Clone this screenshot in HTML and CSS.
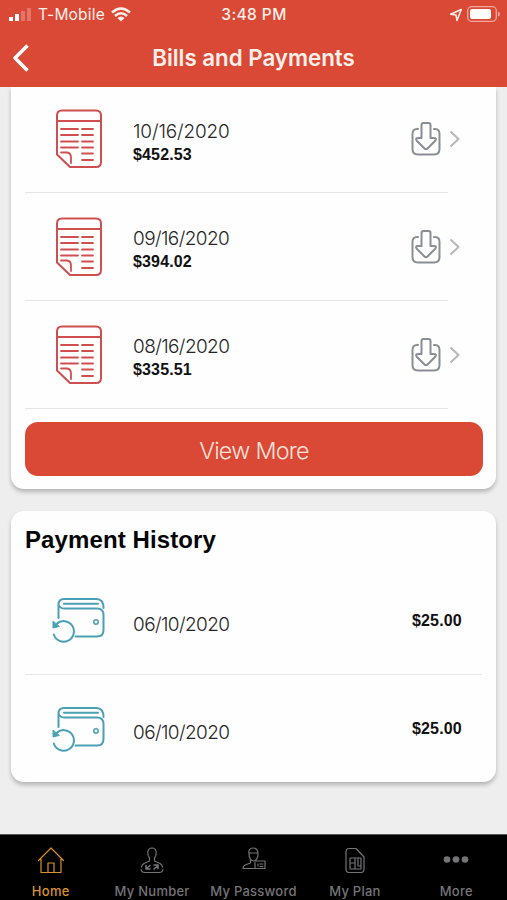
FILE: index.html
```
<!DOCTYPE html>
<html lang="en">
<head>
<meta charset="utf-8">
<title>Bills and Payments</title>
<link rel="stylesheet" href="styles.css">
</head>
<body>
<svg class="defs" aria-hidden="true">
  <symbol id="bill" viewBox="0 0 48 60">
    <path d="M7 1.500H41Q46 1.500 46 6.500V53Q46 58 41 58H15L2 45.500V6.500Q2 1.500 7 1.500ZM2 12H46"/>
    <path stroke-width="1.8" d="M6 20H23M27 20H38M6 26H23M27 26H38M6 32.500H23M27 32.500H38M6 38.500H23M27 38.500H38M27 44.500H38M27 51H38M6 43.500H12Q16 44 16 48.500V54"/>
  </symbol>
  <symbol id="download" viewBox="0 0 30 36">
    <path d="M7 8H6Q1.500 8 1.500 13V28Q1.500 33.500 7 33.500H23Q28.500 33.500 28.500 28V13Q28.500 8 24 8H23"/>
    <path d="M10.500 4Q10.500 2 12.500 2H17.500Q19.500 2 19.500 4V17H22.500Q26.500 17 24 20L16.500 27.500Q15 29 13.500 27.500L6 20Q3.500 17 7.500 17H10.500Z"/>
  </symbol>
  <symbol id="wallet" viewBox="0 0 56 48">
    <path d="M6.500 21V7.500Q6.500 2 12 2H44.500Q51.500 2 51.500 11M6.500 7.500Q8 11.500 12 11.500H45Q51.500 11.500 51.500 18V33Q51.500 39.500 45 39.500H23.500M12 6.700H46"/>
    <circle cx="44" cy="25" r="2.200" stroke-width="1.500"/>
    <path d="M1.800 37.500A10.300 10.300 0 1 0 4.500 27"/><path d="M1 24.500V31L7 29.500Z" fill="currentColor" stroke-width="1"/>
  </symbol>
</svg>
<div class="screen">
  <header class="top">
    <div class="status">
      <div class="carrier">
        <svg class="signal" viewBox="0 0 22 14"><path d="M0 9h4v4H0zM6 6h4v7H6z"/><path opacity=".25" d="M12 3h4v10h-4zM18 0h4v13h-4z"/></svg>
        <span class="carrier-name">T-Mobile</span>
        <svg class="wifi" viewBox="0 0 20 15"><path d="M1 5.500Q10-2.500 19 5.500M4 9Q10 3.500 16 9"/><path class="solid" d="M6.500 11Q10 8 13.500 11L10 14.500Z"/></svg>
      </div>
      <span class="time">3:48 PM</span>
      <div class="power">
        <svg class="location" viewBox="0 0 14 14"><path d="M1.500 6.200L12.300 1.500L8 12.500L7 7Z"/></svg>
        <svg class="battery" viewBox="0 0 34 16"><rect x=".7" y=".7" width="28.600" height="14.600" rx="4" class="shell"/><rect x="3" y="3" width="21" height="10" rx="2"/><path d="M31 5.500Q33 6 33 8T31 10.500Z" opacity=".5"/></svg>
      </div>
    </div>
    <div class="nav">
      <svg class="back" viewBox="0 0 18 30"><path d="M15.500 2.500L3 15L15.500 27.500"/></svg>
      <h1>Bills and Payments</h1>
    </div>
  </header>
  <main>
    <section class="card bills">
      <div class="row"><svg class="bill"><use href="#bill"/></svg><div class="info"><span class="date">10/16/2020</span><span class="amount">$452.53</span></div><svg class="download"><use href="#download"/></svg><svg class="chev" viewBox="0 0 11 18"><path d="M1.500 1.500L9.500 9L1.500 16.500"/></svg></div>
      <div class="row"><svg class="bill"><use href="#bill"/></svg><div class="info"><span class="date">09/16/2020</span><span class="amount">$394.02</span></div><svg class="download"><use href="#download"/></svg><svg class="chev" viewBox="0 0 11 18"><path d="M1.500 1.500L9.500 9L1.500 16.500"/></svg></div>
      <div class="row"><svg class="bill"><use href="#bill"/></svg><div class="info"><span class="date">08/16/2020</span><span class="amount">$335.51</span></div><svg class="download"><use href="#download"/></svg><svg class="chev" viewBox="0 0 11 18"><path d="M1.500 1.500L9.500 9L1.500 16.500"/></svg></div>
      <button class="more">View More</button>
    </section>
    <section class="card history">
      <h2>Payment History</h2>
      <div class="payment"><svg class="wallet"><use href="#wallet"/></svg><span class="date">06/10/2020</span><span class="amount">$25.00</span></div>
      <div class="payment"><svg class="wallet"><use href="#wallet"/></svg><span class="date">06/10/2020</span><span class="amount">$25.00</span></div>
    </section>
  </main>
  <nav class="tabs">
    <div class="tab active"><svg viewBox="0 0 28 28"><path d="M1.500 14.500L14 2L26.500 14.500M4 13V26.500H24V13M11 26V17H17V26"/></svg><span>Home</span></div>
    <div class="tab"><svg viewBox="0 0 28 28"><path d="M11.500 15V12Q9.800 10 9.800 7Q9.800 2 14 2T18.200 7Q18.200 10 16.500 12V15L22 17.500Q24.500 19 24.500 21M11.500 15L6 17.500Q3.500 19 3.500 21M3 23.500Q3.500 26.500 7 26.500H21Q24.500 26.500 25 23.500"/><path stroke-width="1.600" d="M12 19.500L8 23M8 19.500V23H12M16 23L20 19.500M16 19H20V22.500"/></svg><span>My Number</span></div>
    <div class="tab"><svg viewBox="0 0 28 28"><path d="M9 8Q8 2 13 2T18 8Q18 14 13.500 15Q9 14 9 8ZM9 7H18M10.500 14V17L5 19Q3 20 3 22.500H14M16 14V15H25V22.500H15V16M18 18V20M20 18H23M20 20.500H23"/></svg><span>My Password</span></div>
    <div class="tab"><svg viewBox="0 0 28 28"><path d="M8 2.500H15L23 11V23Q23 26.500 20 26.500H8Q5 26.500 5 23V6Q5 2.500 8 2.500ZM9 22V12H20V23H9M9 17H13M14 12V23M17 12V20H20"/></svg><span>My Plan</span></div>
    <div class="tab"><svg class="dots" viewBox="0 0 28 28"><circle cx="5" cy="13.500" r="3.300"/><circle cx="14" cy="13.500" r="3.300"/><circle cx="23" cy="13.500" r="3.300"/></svg><span>More</span></div>
  </nav>
</div>
</body>
</html>
```

FILE: styles.css
```
* { box-sizing: border-box; }
body { margin: 0; font-family: Inter, "Liberation Sans", sans-serif; }
svg { display: block; flex: none; fill: none; stroke: currentColor; stroke-width: 2; stroke-linecap: round; stroke-linejoin: round; }
.defs { width: 0; height: 0; position: absolute; }
.screen { width: 507px; height: 900px; display: flex; flex-direction: column; overflow: hidden; background: #eee; }
.top { height: 87px; flex: none; background: #da4936; color: #fff0e9; }
.status { height: 29px; display: grid; grid-template-columns: 1fr auto 1fr; align-items: center; padding: 0 8px 0 9px; }
.carrier { display: flex; align-items: center; }
.signal { width: 22px; height: 14px; fill: #fff; stroke: none; }
.carrier-name { margin-left: 7px; width: 67px; font-size: 15.5px; letter-spacing: .2px; white-space: nowrap; }
.wifi { width: 20px; height: 15px; margin-left: 6px; stroke-width: 2.6; stroke-linecap: butt; }
.wifi .solid { fill: currentColor; stroke: none; }
.time { font-size: 15.5px; font-weight: 500; letter-spacing: .4px; }
.power { display: flex; justify-content: flex-end; align-items: center; }
.location { width: 14px; height: 14px; margin-right: 4px; stroke-width: 1.5; }
.battery { width: 34px; height: 16px; margin: 0 -2px 2px 0; fill: #fff; stroke: none; }
.battery .shell { fill: none; stroke: #f2a99e; stroke-width: 1.3; }
.nav { height: 58px; display: grid; grid-template-columns: 40px 1fr 40px; align-items: center; }
.back { width: 18px; height: 30px; margin: 0 0 1px 12px; stroke-width: 3.6; stroke-linecap: butt; color: #fff; }
h1 { margin: 0; text-align: center; font-size: 22.3px; font-weight: 600; line-height: 28px; letter-spacing: 0; }
main { flex: 1; min-height: 0; padding: 0 11px; display: flex; flex-direction: column; }
.card { background: #fefefe; box-shadow: 0 3px 4px rgba(0,0,0,.24); }
.bills { height: 402px; padding: 0 14px; border-radius: 0 0 13px 13px; }
.row { width: 423px; height: 108px; display: flex; align-items: center; border-bottom: 1px solid #e5e5e5; }
.row:first-child { height: 106px; padding-bottom: 1px; }
.bill { width: 48px; height: 60px; margin-left: 30px; color: #cf4f50; }
.info { width: 278px; flex: none; margin-left: 30px; padding-top: 7px; display: flex; flex-direction: column; }
.date { font-size: 19px; font-weight: 300; line-height: 24px; color: #252525; letter-spacing: -.6px; }
.row:first-child .date { letter-spacing: -.15px; }
.amount { font-family: "Liberation Sans", sans-serif; font-size: 16px; font-weight: 700; line-height: 22px; letter-spacing: .15px; color: #111; }
.download { width: 30px; height: 36px; color: #898d94; }
.chev { width: 11px; height: 18px; margin-left: 8px; color: #b7b7ba; stroke-linecap: butt; }
.more { display: block; width: 458px; height: 54px; margin-top: 13px; padding: 2px 0 0; border: 0; border-radius: 13px; background: #da4936; color: #ffe3da; font: 300 23.3px Inter, sans-serif; letter-spacing: -.7px; }
.history { height: 271px; margin-top: 22px; padding: 14px; border-radius: 13px; }
h2 { margin: 0; font: 700 24px/30px "Liberation Sans", sans-serif; color: #050505; letter-spacing: .1px; }
.payment { height: 108px; display: flex; align-items: center; }
.payment + .payment { border-top: 1px solid #e5e5e5; }
.payment:nth-child(2) { margin-top: 11px; }
.wallet { width: 56px; height: 48px; margin: 2px 0 0 27px; color: #4aa0b5; }
.payment .date { width: 279px; flex: none; margin: 9px 0 0 25px; }
.payment .amount { margin-top: 1px; }
.tabs { height: 66px; flex: none; display: flex; background: #000; color: #747477; border-top: 1px solid #555; }
.tab { flex: 1; display: flex; flex-direction: column; align-items: center; padding-top: 11px; font-size: 13px; font-weight: 500; line-height: 18px; letter-spacing: .25px; white-space: nowrap; }
.tab svg { width: 28px; height: 28px; margin-bottom: 8px; stroke-width: 1.2; }
.tab.active { color: #d99032; }
.tab .dots { fill: currentColor; stroke: none; width: 28px; }
```
